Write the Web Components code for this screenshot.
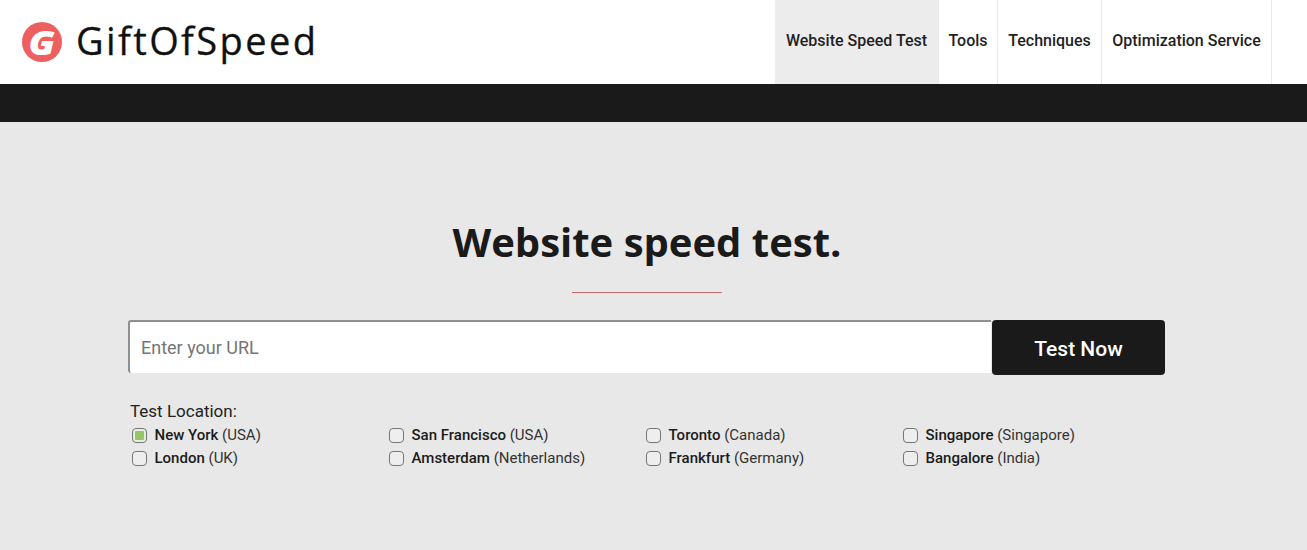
<!DOCTYPE html>
<html>
<head>
<meta charset="utf-8">
<title>GiftOfSpeed</title>
<style>
html, body { margin: 0; padding: 0; background: #e8e8e8; }
body { font-family: Roboto, "Liberation Sans", sans-serif; color: #1b1b1b; overflow: hidden; }
</style>
</head>
<body>
<site-header>
  <nav-link active style="width:164px">Website Speed Test</nav-link>
  <nav-link style="width:59px">Tools</nav-link>
  <nav-link style="width:104px">Techniques</nav-link>
  <nav-link style="width:170px">Optimization Service</nav-link>
</site-header>
<speed-test>
  <location-option checked><b>New York</b> (USA)</location-option>
  <location-option><b>San Francisco</b> (USA)</location-option>
  <location-option><b>Toronto</b> (Canada)</location-option>
  <location-option><b>Singapore</b> (Singapore)</location-option>
  <location-option><b>London</b> (UK)</location-option>
  <location-option><b>Amsterdam</b> (Netherlands)</location-option>
  <location-option><b>Frankfurt</b> (Germany)</location-option>
  <location-option><b>Bangalore</b> (India)</location-option>
</speed-test>

<template id="tpl-header">
<style>
  :host { display: block; }
  #top { height: 84px; background: #fff; display: flex; justify-content: space-between; padding: 0 35px 0 22px; }
  #logo { display: flex; align-items: center; gap: 14px; }
  #mark { width: 40px; height: 40px; border-radius: 50%; background: #ee5f5f; color: #fff; display: flex; align-items: center; justify-content: center;
    font: italic 800 34px/1 "Open Sans", sans-serif; }
  #mark span { display: block; transform: scaleX(1.12); }
  #name { font: 400 38px/1 "Open Sans", sans-serif; letter-spacing: 2.4px; color: #111; padding-bottom: 4px; -webkit-text-stroke: 0.3px #111; }
  nav { display: flex; }
  #bar { height: 38px; background: #1a1a1a; }
</style>
<div id="top">
  <div id="logo"><div id="mark"><span>G</span></div><div id="name">GiftOfSpeed</div></div>
  <nav><slot></slot></nav>
</div>
<div id="bar"></div>
</template>

<template id="tpl-nav">
<style>
  :host { display: flex; align-items: center; justify-content: center; box-sizing: border-box; padding: 0 0 2px; border-right: 1px solid #e9e9e9; font: 500 16px/1 Roboto, sans-serif; color: #1f1f1f; white-space: nowrap; }
  :host([active]) { background: #ececec; }
</style>
<slot></slot>
</template>

<template id="tpl-test">
<style>
  :host { display: block; height: 428px; background: #e8e8e8; padding: 0 142px 0 128px; }
  h1 { margin: 0; padding-top: 93px; text-align: center; font: 700 40px/54px "Open Sans", sans-serif; color: #1a1a1a; padding-left: 1px; }
  #rule { width: 150px; height: 1px; background: #d0656b; margin: 23px auto 27px; }
  form { display: flex; gap: 1px; margin: 0; align-items: flex-start; }
  input { flex: 1; min-width: 0; box-sizing: border-box; height: 53px; border: 0; border-top: 2px solid #8f8f8f; border-left: 2px solid #8f8f8f; border-radius: 3px 0 0 3px;
    background: #fff; padding: 0 10px 1px 11px; font: 400 18px Roboto, sans-serif; outline: none; }
  input::placeholder { color: #757575; opacity: 1; }
  button { width: 173px; height: 55px; border: 0; border-radius: 4px; background: #1a1a1a; color: #fff; font: 500 21px Roboto, sans-serif; padding: 2px 0 0; }
  #label { font: 400 17px/19px Roboto, sans-serif; color: #222; margin: 27px 0 0 2px; }
  #grid { display: grid; grid-template-columns: repeat(4, 257px); grid-auto-rows: 23px; margin: 3px 0 0 4px; }
</style>
<h1>Website speed test.</h1>
<div id="rule"></div>
<form><input type="text" placeholder="Enter your URL"><button type="button">Test Now</button></form>
<div id="label">Test Location:</div>
<div id="grid"><slot></slot></div>
</template>

<template id="tpl-option">
<style>
  :host { display: flex; align-items: center; gap: 7.5px; font: 400 15px/23px Roboto, sans-serif; color: #333; white-space: nowrap; }
  #box { width: 15px; height: 15px; box-sizing: border-box; border: 1px solid #767676; border-radius: 4px; background: #eee; display: flex; align-items: center; justify-content: center; flex: none; }
  :host([checked]) #box { background: #e8efe0; }
  :host([checked]) #box i { display: block; width: 9px; height: 9px; background: #96c46a; border-radius: 1px; }
  ::slotted(b) { font-weight: 500; color: #1b1b1b; }
  #text { display: block; }
</style>
<span id="box"><i></i></span><span id="text"><slot></slot></span>
</template>

<script>
function defineFrom(tag, tplId) {
  customElements.define(tag, class extends HTMLElement {
    constructor() {
      super();
      this.attachShadow({ mode: "open" });
      this.shadowRoot.appendChild(document.getElementById(tplId).content.cloneNode(true));
    }
  });
}
defineFrom("site-header", "tpl-header");
defineFrom("nav-link", "tpl-nav");
defineFrom("speed-test", "tpl-test");
defineFrom("location-option", "tpl-option");
</script>
</body>
</html>
